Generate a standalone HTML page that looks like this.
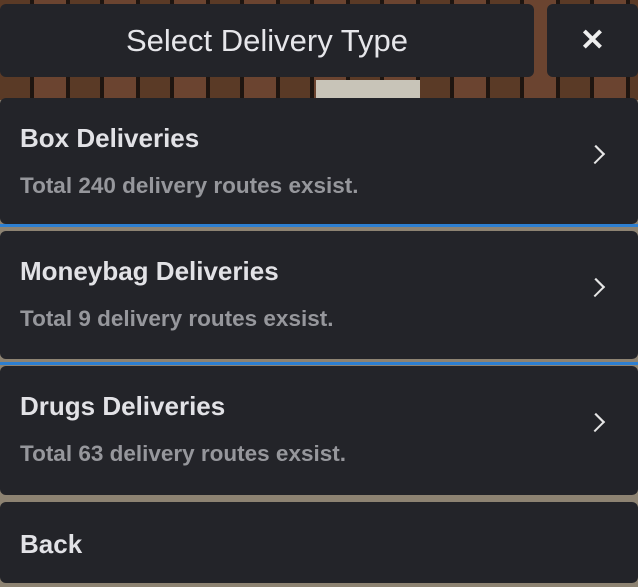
<!DOCTYPE html>
<html><head><style>
html,body{margin:0;padding:0}
body{width:638px;height:587px;overflow:hidden;position:relative;font-family:"Liberation Sans",Arial,sans-serif;
background:#8d8372;}
.wood{position:absolute;left:0;top:0;width:638px;height:100px;
background:repeating-linear-gradient(90deg,#5a3a26 0 30px,#1e1510 30px 34px,#6b4430 34px 66px,#1e1510 66px 70px);}
.box{position:absolute;background:#232429;border-radius:6px;}
.hdr{left:0;top:4px;width:534px;height:73px;color:#e6e6ea;font-size:31px;text-align:center;line-height:73px;}
.cls{left:547px;top:4px;width:91px;height:73px;color:#eee;font-size:30px;text-align:center;line-height:73px;font-weight:bold}
.card .t{position:absolute;left:20px;top:25px;font-size:26px;font-weight:bold;color:#e2e2e6}
.card .s{position:absolute;left:20px;top:75px;font-size:22.5px;font-weight:bold;color:#96979c}
.card .a{position:absolute;right:36px;top:50px;width:11px;height:11px;border-right:2.5px solid #e6e6e6;border-top:2.5px solid #e6e6e6;transform:rotate(45deg) scaleY(1.1)}
.blue{position:absolute;left:0;width:638px;height:3px;background:#2d7fd0}
</style></head><body>
<div class="wood"></div>
<div style="position:absolute;left:316px;top:80px;width:104px;height:18px;background:#c8c4b8"></div>
<div class="box hdr">Select Delivery Type</div>
<div class="box cls">✕</div>
<div class="box card" style="left:0;top:98px;width:638px;height:126px"><div class="t">Box Deliveries</div><div class="s">Total 240 delivery routes exsist.</div><div class="a"></div></div>
<div class="blue" style="top:224px"></div>
<div class="box card" style="left:0;top:231px;width:638px;height:128px"><div class="t">Moneybag Deliveries</div><div class="s">Total 9 delivery routes exsist.</div><div class="a"></div></div>
<div class="blue" style="top:362px"></div>
<div class="box card" style="left:0;top:366px;width:638px;height:129px"><div class="t">Drugs Deliveries</div><div class="s">Total 63 delivery routes exsist.</div><div class="a"></div></div>
<div class="box card" style="left:0;top:502px;width:638px;height:81px"><div class="t" style="top:27px">Back</div></div>
</body></html>
